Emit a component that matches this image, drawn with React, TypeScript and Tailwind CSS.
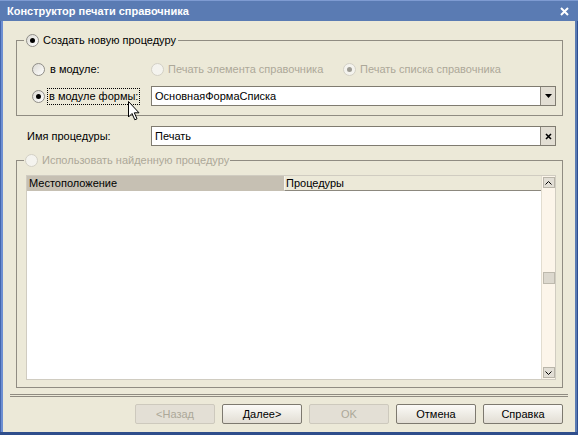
import React from "react"

function Radio({ checked, disabled }: { checked?: boolean; disabled?: boolean }) {
  return (
    <span
      className={`flex h-[13px] w-[13px] shrink-0 items-center justify-center rounded-full border ${
        disabled ? "border-[#d3d0c5] bg-[#f4f3ee]" : "border-[#8f8d88] bg-gradient-to-br from-[#dcdad3] to-white"
      }`}
    >
      {checked && <span className={`h-[5px] w-[5px] rounded-full ${disabled ? "bg-[#9c9a92]" : "bg-black"}`} />}
    </span>
  )
}

function Chevron({ down }: { down?: boolean }) {
  return (
    <svg width="7" height="4" viewBox="0 0 7 4">
      <polyline points={down ? "0.5,0.5 3.5,3.5 6.5,0.5" : "0.5,3.5 3.5,0.5 6.5,3.5"} fill="none" stroke="#000" strokeWidth="1" />
    </svg>
  )
}

function Button({ label, disabled }: { label: string; disabled?: boolean }) {
  return (
    <div
      className={`flex h-[20px] w-[80px] items-center justify-center rounded-[2px] border ${
        disabled
          ? "border-[#cdc9bd] bg-[#e3dfd5] text-[#aca899]"
          : "border-[#7d796f] bg-gradient-to-b from-[#fbfaf7] to-[#e2ded4] text-black"
      }`}
    >
      {label}
    </div>
  )
}

export default function App() {
  return (
    <div className="relative flex h-[435px] w-[578px] select-none flex-col overflow-hidden bg-[#5a7bb3] font-['Liberation_Sans',Arial,sans-serif] text-[11px] leading-none text-black">
      {/* title bar */}
      <div className="flex h-[21px] shrink-0 items-center justify-between border-t border-[#7e9bd2] pl-[7px] pr-[9px]">
        <span className="text-[11px] font-bold text-white">Конструктор печати справочника</span>
        <svg width="9" height="9" viewBox="0 0 9 9">
          <path d="M1 1 L8 8 M8 1 L1 8" stroke="#fff" strokeWidth="2" />
        </svg>
      </div>

      <div className="flex h-[411px] shrink-0">
        <div className="w-[3px] border-l border-[#4466ae] bg-[#6d8fd2]" />

        {/* client */}
        <div className="flex w-[572px] flex-col bg-[#ece9d8]">
          <fieldset className="ml-[13px] mr-[12px] mt-[11px] border border-[#908c82] p-0">
            <legend className="ml-[7px] flex h-[16px] items-center gap-[4px] px-[2px]">
              <Radio checked />
              <span>Создать новую процедуру</span>
            </legend>
            <div className="flex flex-col gap-[9px] pb-[9px] pl-[15px] pr-[6px] pt-[13px]">
              <div className="flex h-[16px] items-center">
                <div className="flex w-[119px] items-center gap-[5px]">
                  <Radio />
                  <span>в модуле:</span>
                </div>
                <div className="flex w-[192px] items-center gap-[4px] text-[#aca899]">
                  <Radio disabled />
                  <span>Печать элемента справочника</span>
                </div>
                <div className="flex items-center gap-[4px] text-[#aca899]">
                  <Radio checked disabled />
                  <span>Печать списка справочника</span>
                </div>
              </div>
              <div className="flex h-[20px] items-center">
                <div className="flex w-[119px] items-center gap-[2px]">
                  <Radio checked />
                  <span className="flex h-[17px] items-center border border-dotted border-black px-[1px]">в модуле формы:</span>
                </div>
                <div className="flex h-[20px] w-[405px] border border-[#7f7b70] bg-white">
                  <span className="flex flex-1 items-center pl-[3px]">ОсновнаяФормаСписка</span>
                  <span className="flex w-[15px] items-center justify-center border-l border-[#8c887e] bg-[#e2ded3]">
                    <svg width="7" height="4" viewBox="0 0 7 4">
                      <path d="M0 0 H7 L3.5 4 Z" fill="#000" />
                    </svg>
                  </span>
                </div>
              </div>
            </div>
          </fieldset>

          <div className="mt-[10px] flex h-[20px] items-center pl-[24px]">
            <span className="w-[124px]">Имя процедуры:</span>
            <div className="flex h-[20px] w-[405px] border border-[#7f7b70] bg-white">
              <span className="flex flex-1 items-center pl-[3px]">Печать</span>
              <span className="flex w-[15px] items-center justify-center border-l border-[#8c887e] bg-[#e2ded3]">
                <svg width="7" height="7" viewBox="0 0 7 7">
                  <path d="M1 1 L6 6 M6 1 L1 6" stroke="#000" strokeWidth="1.6" />
                </svg>
              </span>
            </div>
          </div>

          <fieldset className="ml-[13px] mr-[12px] mt-[6px] border border-[#908c82] p-0">
            <legend className="ml-[7px] flex h-[16px] items-center gap-[4px] px-[1px] text-[#aca899]">
              <Radio disabled />
              <span>Использовать найденную процедуру</span>
            </legend>
            <div className="pb-[7px] pl-[9px] pr-[6px] pt-[7px]">
              <div className="flex h-[205px] w-[530px] border border-[#d0ccc1] bg-white">
                <div className="flex flex-1 flex-col">
                  <div className="flex h-[15px]">
                    <span className="flex w-[257px] items-center bg-[#c6c0b3] pl-[2px]">Местоположение</span>
                    <span className="flex flex-1 items-center border-b border-l border-b-[#8c887e] border-l-[#f5f3ec] bg-[#ece9d8] pl-[1px]">Процедуры</span>
                  </div>
                </div>
                <div className="flex w-[14px] flex-col items-center border-l border-[#e2ddd0] bg-[#fcf5ea] py-[1px]">
                  <div className="flex h-[11px] w-[12px] items-center justify-center border border-[#b9b5a9] bg-[#e2ded5]">
                    <Chevron />
                  </div>
                  <div className="mt-[84px] h-[12px] w-[12px] border border-[#bdb9ad] bg-[#dcd8ce]" />
                  <div className="flex-1" />
                  <div className="flex h-[11px] w-[12px] items-center justify-center border border-[#b9b5a9] bg-[#e2ded5]">
                    <Chevron down />
                  </div>
                </div>
              </div>
            </div>
          </fieldset>

          <div className="mx-[7px] mt-[6px] h-[3px] border-y border-[#8f8b81]" />

          <div className="mt-[7px] flex justify-end gap-[7px] pr-[12px]">
            <Button label="<Назад" disabled />
            <Button label="Далее>" />
            <Button label="OK" disabled />
            <Button label="Отмена" />
            <Button label="Справка" />
          </div>
        </div>

        <div className="w-[3px] border-r border-[#2f4f90] bg-[#5a7bb3]" />
      </div>

      <div className="h-[3px] shrink-0 bg-[#2f4e8c]" />

      {/* mouse pointer */}
      <svg className="absolute left-[128px] top-[101px]" width="13" height="20" viewBox="0 0 13 20">
        <path d="M0.5 0.5 V16 L4 12.5 L6.8 18.8 L9 17.8 L6.3 11.8 H11 Z" fill="#fff" stroke="#000" strokeWidth="1" />
      </svg>
    </div>
  )
}
